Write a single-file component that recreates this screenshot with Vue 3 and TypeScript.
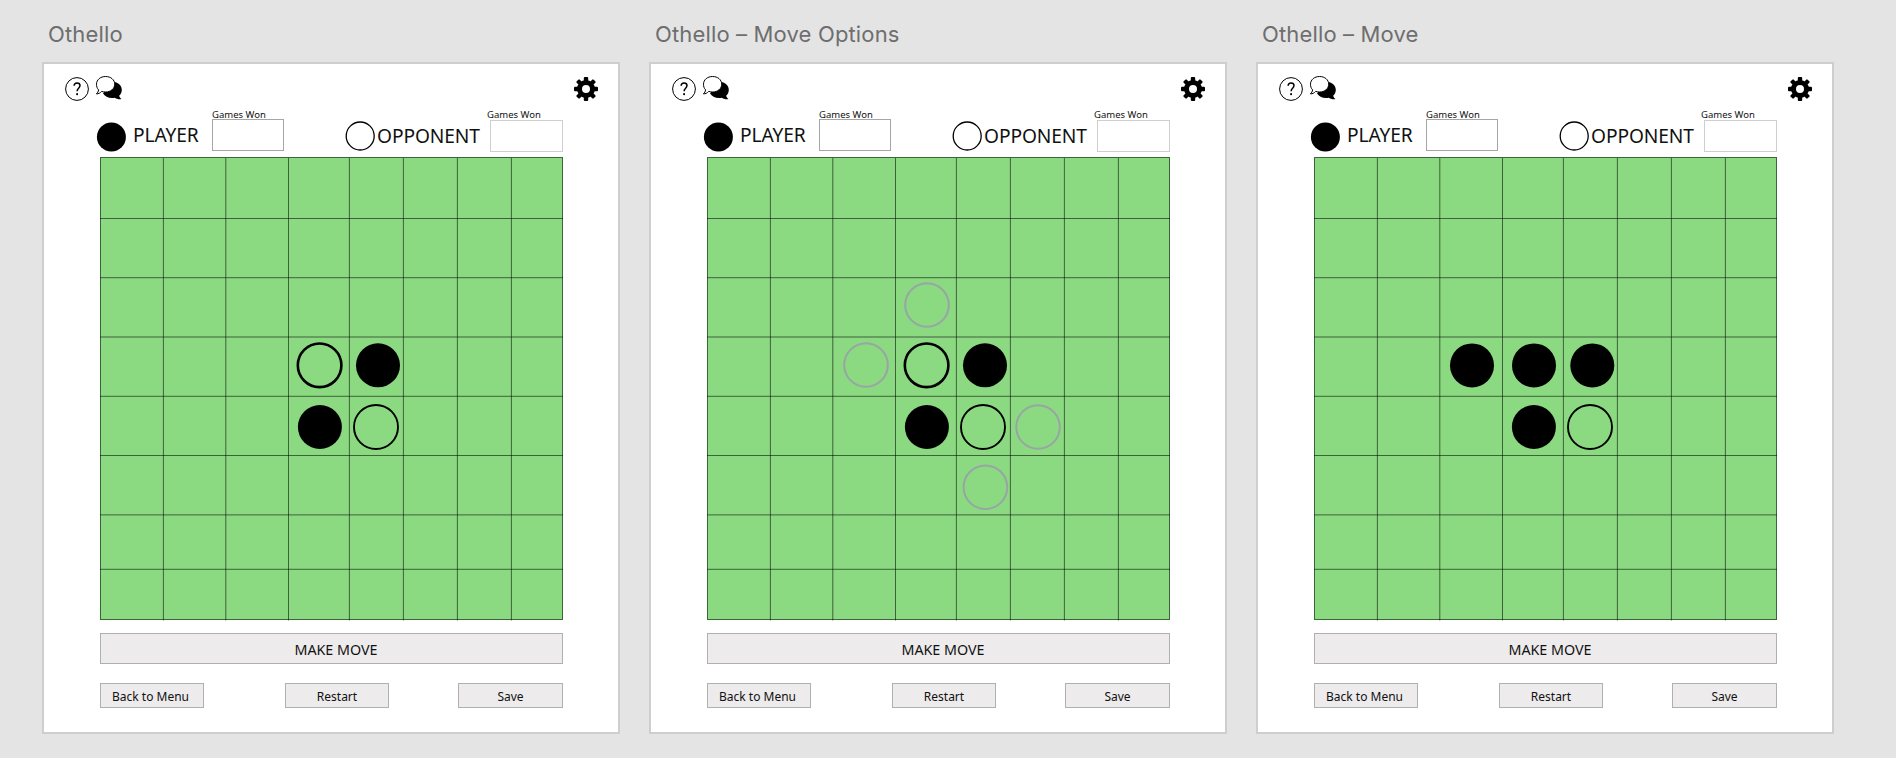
<script setup lang="ts">
type Kind = 'black' | 'white' | 'whiteBold' | 'option'
interface Disc { x: number; y: number; kind: Kind }
interface Artboard { title: string; discs: Disc[] }

const radius: Record<Kind, number> = { black: 22, white: 22, whiteBold: 21.8, option: 21.8 }

// Board-local coordinates of the rules and discs
const columns = [63.4, 125.8, 188.5, 249.4, 303.4, 357.4, 411.4]
const rows = [61.5, 120.7, 180, 239.3, 298.5, 357.9, 412.3]

const lower: Disc[] = [
  { x: 219.9, y: 270, kind: 'black' },
  { x: 276, y: 270, kind: 'white' },
]
const opening: Disc[] = [
  { x: 219.6, y: 208.3, kind: 'whiteBold' },
  { x: 278, y: 208.3, kind: 'black' },
  ...lower,
]

const artboards: Artboard[] = [
  { title: 'Othello', discs: opening },
  {
    title: 'Othello – Move Options',
    discs: [
      ...opening,
      { x: 220, y: 148, kind: 'option' },
      { x: 159, y: 208, kind: 'option' },
      { x: 331, y: 270, kind: 'option' },
      { x: 278.4, y: 330.2, kind: 'option' },
    ],
  },
  {
    title: 'Othello – Move',
    discs: [
      { x: 158, y: 208.4, kind: 'black' },
      { x: 220, y: 208.4, kind: 'black' },
      { x: 278.3, y: 208.4, kind: 'black' },
      ...lower,
    ],
  },
]
const teeth = [0, 45, 90, 135, 180, 225, 270, 315]
</script>

<template>
  <main class="canvas">
    <section v-for="a in artboards" :key="a.title" class="artboard">
      <h2 class="title">{{ a.title }}</h2>
      <div class="screen">
        <header class="toolbar">
          <svg class="help" viewBox="0 0 24 24">
            <circle cx="12" cy="12" r="11.4" fill="#fff" stroke="#000" />
            <path d="M9.100 8.800C9.200 6.800 10.400 5.900 12 5.900c1.800 0 3 1 3 2.700 0 2.500-2.900 2.800-2.900 5.600" fill="none" stroke="#000" stroke-width="1.500" />
            <rect x="11.200" y="16.200" width="1.800" height="1.900" />
          </svg>
          <svg class="chat" viewBox="0 0 28 26">
            <path d="M19.800 6.900c4.400 1 7 4.200 7 7.800 0 2.500-1 4.600-2.600 6.100.4 1.700 1.400 2.700 2.300 3.300-2.500.5-4.800 0-6.600-1.300-5.400 1-9.800-.8-11.900-4.600z" />
            <path d="M10.600 1.500c5.100 0 9.100 3.200 9.100 7.700s-4 7.800-9.100 7.800c-1.400 0-2.700-.2-3.900-.6-1.300 1.600-3.300 2.500-5.300 2.500 1.300-1.200 2-2.400 2.200-4.100C2.100 13.400 1.500 11.400 1.500 9.200c0-4.500 4-7.700 9.100-7.700z" fill="#fff" stroke="#000" stroke-width="1" />
          </svg>
          <svg class="gear" viewBox="-12 -12 24 24">
            <rect v-for="t in teeth" :key="t" x="-2.200" y="-12" width="4.400" height="6" rx="1" :transform="`rotate(${t})`" />
            <circle r="6.500" fill="none" stroke="#000" stroke-width="5" />
          </svg>
        </header>

        <div class="scores">
          <svg class="token player-token" viewBox="0 0 30 30"><circle cx="15.400" cy="15" r="14.500" /></svg>
          <span class="name player-name">PLAYER</span>
          <div class="wins player-wins">
            <span class="caption">Games Won</span>
            <div class="box"></div>
          </div>
          <svg class="token opponent-token" viewBox="0 0 30 30"><circle cx="15.200" cy="15" r="14" fill="#fff" stroke="#000" stroke-width="1.300" /></svg>
          <span class="name opponent-name">OPPONENT</span>
          <div class="wins opponent-wins">
            <span class="caption">Games Won</span>
            <div class="box"></div>
          </div>
        </div>

        <svg class="board" viewBox="0 0 463 464">
          <rect x=".5" y=".5" width="462" height="462" fill="#8bd981" stroke="#39663a" />
          <g class="rules">
            <line v-for="x in columns" :key="'c' + x" :x1="x" :x2="x" y1="1" y2="463.500" />
            <line v-for="y in rows" :key="'r' + y" x1="0" x2="463" :y1="y" :y2="y" />
          </g>
          <circle v-for="(d, i) in a.discs" :key="i" :cx="d.x" :cy="d.y" :r="radius[d.kind]" :class="d.kind" />
        </svg>

        <button class="make">MAKE MOVE</button>
        <footer class="actions">
          <button class="small back">Back to Menu</button>
          <button class="small restart">Restart</button>
          <button class="small save">Save</button>
        </footer>
      </div>
    </section>
  </main>
</template>

<style>
html, body { background: #e4e4e4; overflow: hidden; }
</style>

<style scoped>
.canvas {
  box-sizing: border-box;
  display: flex;
  gap: 29px;
  width: 1896px;
  height: 758px;
  padding-left: 42px;
  background: #e4e4e4;
  font-family: "Noto Sans", sans-serif;
  color: #111;
}
.artboard { width: 578px; flex: none; }
.title {
  height: 62px;
  margin: 0;
  padding-left: 6px;
  box-sizing: border-box;
  font: 400 22px/68px Inter, sans-serif;
  letter-spacing: 0.15px;
  color: #6e6e6e;
  white-space: nowrap;
}
.screen {
  box-sizing: border-box;
  height: 672px;
  border: 2px solid #cecece;
  background: #fff;
  display: flex;
  flex-direction: column;
}
.toolbar { display: flex; height: 44px; padding: 11px 20px 0 21px; box-sizing: border-box; flex: none; }
.help { width: 24px; height: 24px; margin-top: 2px; }
.chat { width: 28px; height: 26px; margin-left: 6px; }
.gear { width: 24px; height: 24px; margin: 2px 0 0 auto; }
.scores { display: flex; height: 49px; flex: none; padding-left: 52px; }
.token { width: 30px; height: 30px; flex: none; }
.player-token { margin-top: 14px; }
.opponent-token { margin: 13px 0 0 61px; }
.name { font-size: 19.200px; line-height: 28px; letter-spacing: -0.1px; white-space: nowrap; flex: none; }
.player-name { width: 77px; margin: 13px 0 0 7px; }
.opponent-name { width: 110px; margin: 14px 0 0 2px; }
.wins { display: flex; flex-direction: column; width: 72px; flex: none; }
.player-wins { margin-left: 2px; }
.caption { height: 11px; font-size: 9.500px; line-height: 13px; white-space: nowrap; }
.box { box-sizing: border-box; height: 32px; border: 1px solid #a6a6a6; }
.opponent-wins { width: 76px; }
.opponent-wins .box { width: 73px; margin: 1px 0 0 3px; border-color: #cfcfcf; }
.board { display: block; width: 463px; height: 464px; margin-left: 56px; flex: none; }
.rules line { stroke: #000; stroke-opacity: 0.55; stroke-width: 1; }
.black { fill: #000; }
.white { fill: none; stroke: #000; stroke-width: 1.900; }
.whiteBold { fill: none; stroke: #000; stroke-width: 2.600; }
.option { fill: none; stroke: #98a5a5; stroke-width: 2; }
button {
  box-sizing: border-box;
  margin: 0;
  padding: 0;
  border: 1px solid #b0b0b0;
  background: #edebec;
  color: #111;
  font-family: "Noto Sans", sans-serif;
}
.make { width: 463px; height: 31px; margin: 12px 0 0 56px; padding: 2px 0 0 9px; font-size: 14.300px; line-height: 27px; flex: none; }
.actions { display: flex; width: 463px; margin: 19px 0 0 56px; }
.small { width: 104px; height: 25px; padding-top: 2px; font-size: 12px; line-height: 21px; }
.back { padding-right: 3px; }
.restart { margin-left: 81px; }
.save { width: 105px; margin-left: auto; }
</style>
